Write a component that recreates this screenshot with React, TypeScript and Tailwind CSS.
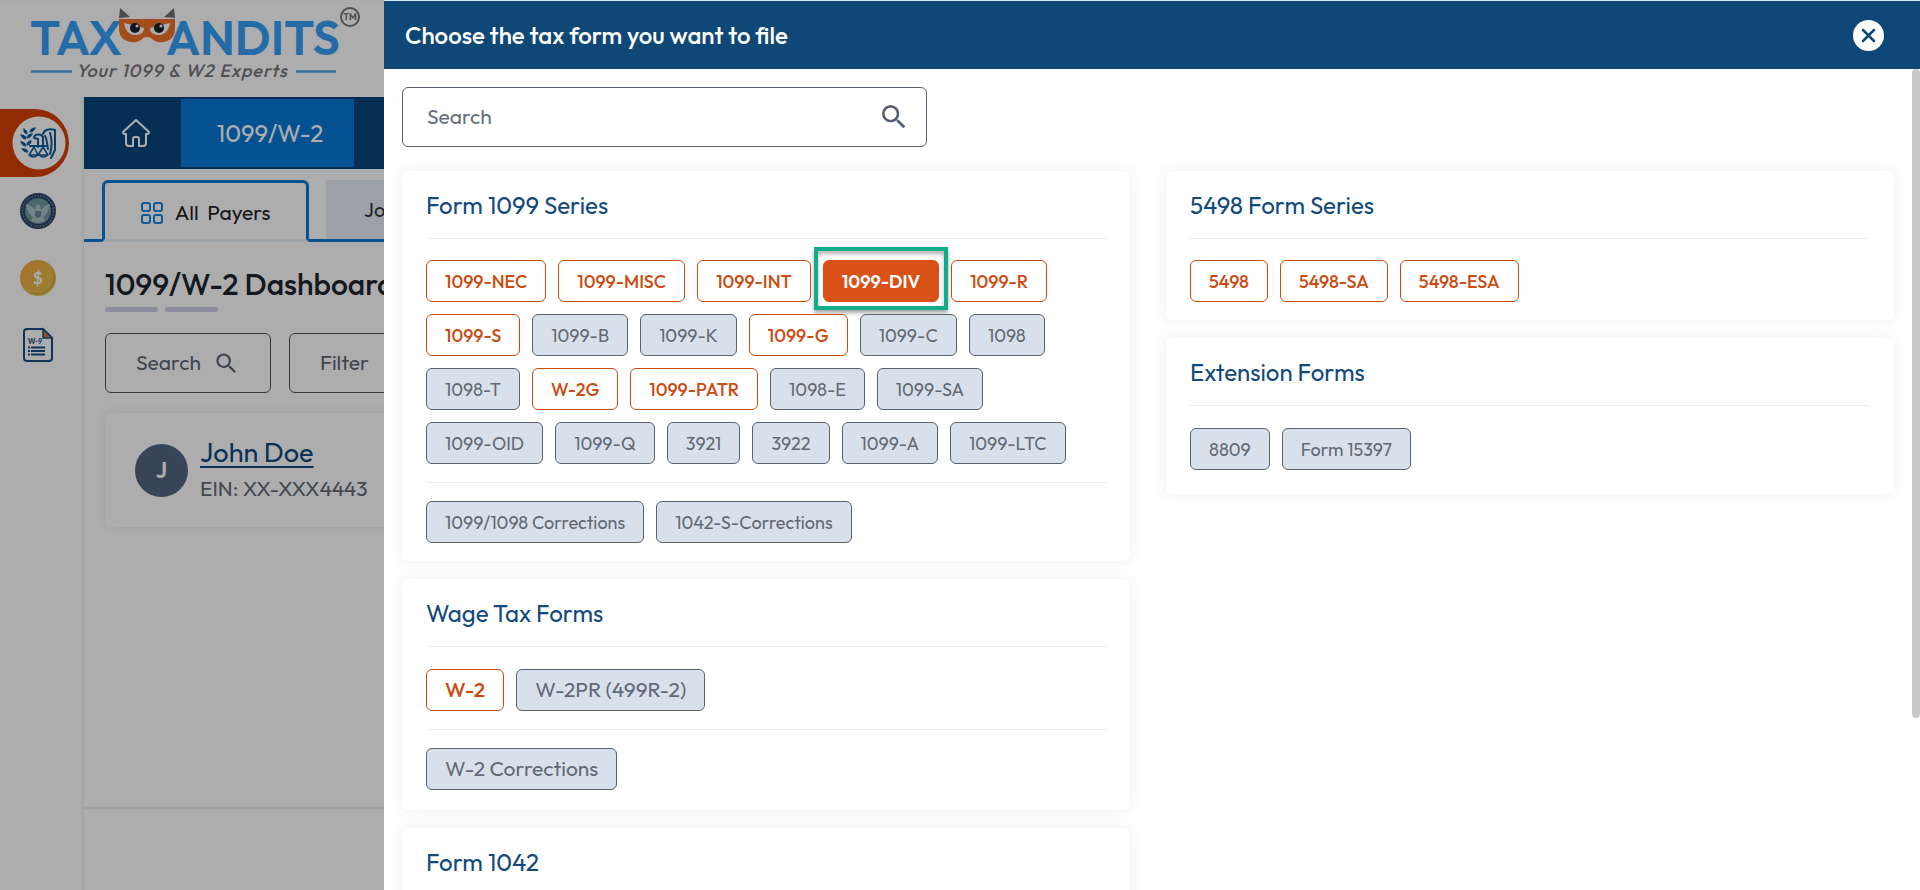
import {type FC, type ReactNode, useState} from "react";
import {MdSearch} from "react-icons/md";

interface IForm {
    name: string,
    enabled?: boolean,
    highlighted?: boolean
}

interface ISeries {
    title: string,
    forms: IForm[],
    corrections?: IForm[],
    large?: boolean,
    roomy?: boolean
}

const leftSeries: ISeries[] = [
    {
        title: "Form 1099 Series",
        forms: [
            {name: "1099-NEC", enabled: true},
            {name: "1099-MISC", enabled: true},
            {name: "1099-INT", enabled: true},
            {name: "1099-DIV", enabled: true, highlighted: true},
            {name: "1099-R", enabled: true},
            {name: "1099-S", enabled: true},
            {name: "1099-B"},
            {name: "1099-K"},
            {name: "1099-G", enabled: true},
            {name: "1099-C"},
            {name: "1098"},
            {name: "1098-T"},
            {name: "W-2G", enabled: true},
            {name: "1099-PATR", enabled: true},
            {name: "1098-E"},
            {name: "1099-SA"},
            {name: "1099-OID"},
            {name: "1099-Q"},
            {name: "3921"},
            {name: "3922"},
            {name: "1099-A"},
            {name: "1099-LTC"}
        ],
        corrections: [{name: "1099/1098 Corrections"}, {name: "1042-S-Corrections"}]
    },
    {
        title: "Wage Tax Forms",
        forms: [{name: "W-2", enabled: true}, {name: "W-2PR (499R-2)"}],
        corrections: [{name: "W-2 Corrections"}],
        large: true
    },
    {
        title: "Form 1042",
        forms: []
    }
];

const rightSeries: ISeries[] = [
    {
        title: "5498 Form Series",
        forms: [
            {name: "5498", enabled: true},
            {name: "5498-SA", enabled: true},
            {name: "5498-ESA", enabled: true}
        ]
    },
    {
        title: "Extension Forms",
        forms: [{name: "8809"}, {name: "Form 15397"}],
        roomy: true
    }
];

const enabledClasses = "border-[#cb4b10] bg-white text-[#cb4b10] font-medium cursor-pointer";
const selectedClasses = "border-[#d95117] bg-[#d95117] text-white font-semibold cursor-pointer";
const disabledClasses = "border-[#5b626c] bg-[#d8e0ec] text-[#626a74]";

const FormChip: FC<{ form: IForm, large?: boolean }> = ({form, large}) => {
    const colors = form.highlighted ? selectedClasses : form.enabled ? enabledClasses : disabledClasses;
    return (
        <div className="relative">
            <button
                type="button"
                disabled={!form.enabled}
                className={`h-[42px] px-[18px] rounded-md border whitespace-nowrap ${large ? "text-[21px]" : "text-[18px]"} ${colors}`}
            >
                {form.name}
            </button>
            {form.highlighted && (
                <span
                    className="absolute -inset-x-[9px] -top-[13px] -bottom-2 border-4 border-[#12ab8b] shadow-[0_3px_4px_rgba(0,0,0,0.35),inset_0_3px_4px_rgba(0,0,0,0.3)] pointer-events-none"/>
            )}
        </div>
    );
}

const SeriesCard: FC<{ series: ISeries }> = ({series}) => (
    <section
        className={`bg-white rounded-md px-6 shadow-[0_0_14px_rgba(60,90,120,0.10)] ${series.roomy ? "pb-6" : series.large ? "pb-5" : "pb-[18px]"}`}
    >
        <h2 className="h-[68px] flex items-center border-b border-[#e9eef3] text-[24px] text-[#134a7c]">
            {series.title}
        </h2>
        <div className={`flex flex-wrap gap-3 ${series.roomy || series.large ? "pt-[22px]" : "pt-[21px]"}`}>
            {series.forms.map(form => <FormChip key={form.name} form={form} large={series.large}/>)}
        </div>
        {series.corrections && (
            <div className="flex flex-wrap gap-3 mt-[18px] pt-[18px] border-t border-[#e9eef3]">
                {series.corrections.map(form => <FormChip key={form.name} form={form} large={series.large}/>)}
            </div>
        )}
    </section>
);

const Logo: FC = () => (
    <svg width="344" height="96" viewBox="0 0 344 96" fontFamily="Outfit, Lato, sans-serif" role="img"
         aria-label="TaxBandits">
        <g fill="#349ff6" fontWeight="600" fontSize="48">
            <text x="30" y="54">TAX</text>
            <text x="166" y="54">ANDITS</text>
        </g>
        <path d="M120 7l10 9-11 1zM174 7l-10 9 11 1z" fill="#6f6f75"/>
        <path
            d="M119 18h56v10c0 7-4 12-12 13-6 1-9-1-12-4q-4-2-8 0c-3 3-6 5-12 4-8-1-12-6-12-13z"
            fill="#f0702a"/>
        <path d="M124 22l20 5c0 5-4 7-9 7-6 0-10-5-11-12zM170 22l-20 5c0 5 4 7 9 7 6 0 10-5 11-12z" fill="#fff"/>
        <circle cx="135" cy="27" r="5" fill="#16202c"/>
        <circle cx="159" cy="27" r="5" fill="#16202c"/>
        <circle cx="137" cy="25" r="1.500" fill="#fff"/>
        <circle cx="161" cy="25" r="1.500" fill="#fff"/>
        <path d="M31 70.500h41M296 70.500h40" stroke="#4fa5e6" strokeWidth="2.500"/>
        <text x="76" y="76" fontSize="18" fontWeight="500" fontStyle="italic" fill="#77777c" letterSpacing="1">
            Your 1099 &amp; W2 Experts
        </text>
    </svg>
);

const HomeIcon: FC = () => (
    <svg width="30" height="30" viewBox="0 0 30 30" fill="none" stroke="#fff" strokeWidth="2" strokeLinejoin="round">
        <path
            d="M15 2L2 14q0 2 2 2h1v9q0 3 3 3h4v-7q0-2 2-2h2q2 0 2 2v7h4q3 0 3-3v-9h1q2 0 2-2L15 2z"/>
    </svg>
);

const EagleIcon: FC = () => (
    <svg width="54" height="54" viewBox="0 0 54 54" fill="none" stroke="#0f5c9c" strokeWidth="1.500"
         strokeLinecap="round" strokeLinejoin="round">
        <circle cx="27" cy="27" r="26.500" fill="#fff" stroke="none"/>
        <path
            d="M9 19q1 4 5 4 0-4-5-4zM9 26q1 4 5 4 0-4-5-4zM10 33q2 4 6 3-1-4-6-3zM12 13q-1 4 3 5 1-3-3-5zM23 12q-5 0-5 4 4 0 5-4zM20 18q-5 0-5 4 4 0 5-4zM19 25q-4 0-4 4 4 0 4-4z"
            fill="#0f5c9c" strokeWidth="1"/>
        <path d="M22 22c0-4 7-5 9-1v9M22 22l4 1v8M18 30h16" strokeWidth="2"/>
        <path d="M22 31l-5 8h9zM31 31l-5 8h10zM17 39q4 4 9 0M27 39q4 4 9 0"/>
        <path d="M31 18c1-4 6-6 12-4v20l-4 8" strokeWidth="2"/>
        <path d="M33 20c2 3 2 8 3 13M38 17c2 6 2 14 0 21" strokeWidth="2"/>
    </svg>
);

const SealIcon: FC = () => (
    <svg width="36" height="36" viewBox="0 0 36 36">
        <circle cx="18" cy="18" r="18" fill="#2b4468"/>
        <circle cx="18" cy="18" r="15.500" fill="none" stroke="#5d7890" strokeWidth="2" strokeDasharray="1.500 1.500"/>
        <circle cx="18" cy="18" r="13" fill="#6d98a0"/>
        <path d="M6 11c4 1 7 3 9 6l1-4q2-3 4 0l1 4c2-3 5-5 9-6-1 7-4 11-7 13l2 4-7 2-7-2 2-4c-3-2-6-6-7-13z"
              fill="#a9c3c9"/>
        <path d="M15 18h6v5q-3 4-6 0z" fill="#6888a0"/>
    </svg>
);

const CoinIcon: FC = () => (
    <svg width="36" height="36" viewBox="0 0 36 36">
        <defs>
            <linearGradient id="coin" x1="0" y1="0" x2="1" y2="1">
                <stop offset="0" stopColor="#f6a33c"/>
                <stop offset="1" stopColor="#dcc653"/>
            </linearGradient>
        </defs>
        <circle cx="18" cy="18" r="18" fill="url(#coin)"/>
        <path d="M31 8a16 16 0 0 1-20 24" fill="none" stroke="#c79a35" strokeWidth="1"/>
        <text x="18" y="24" textAnchor="middle" fontSize="17" fontWeight="700" fill="#fff"
              fontFamily="Lato, sans-serif">$
        </text>
    </svg>
);

const W9Icon: FC = () => (
    <svg width="30" height="36" viewBox="0 0 30 36">
        <path d="M4 2h16l9 9v20q0 3-3 3H4q-3 0-3-3V5q0-3 3-3z" fill="none" stroke="#174d80" strokeWidth="2"/>
        <path d="M20 2v9h9z" fill="#e8713c" stroke="#174d80" strokeWidth="1.500"/>
        <text x="5" y="17" fontSize="7" fontWeight="900" fill="#174d80" fontFamily="Lato, sans-serif">W-9</text>
        <path d="M5 20.500h2M8 20.500h14M5 24h2M8 24h14M5 27.500h2M8 27.500h14" stroke="#174d80" strokeWidth="2"/>
    </svg>
);

const GridIcon: FC = () => (
    <svg width="22" height="22" viewBox="0 0 22 22" fill="none" stroke="#1688e0" strokeWidth="2">
        <rect x="1" y="1" width="8" height="8" rx="2"/>
        <rect x="13" y="1" width="8" height="8" rx="2"/>
        <rect x="1" y="13" width="8" height="8" rx="2"/>
        <rect x="13" y="13" width="8" height="8" rx="2"/>
    </svg>
);

const SideItem: FC<{ label: string, children: ReactNode }> = ({label, children}) => (
    <a href="#" aria-label={label} className="h-[67px] w-[76px] flex items-center justify-center">{children}</a>
);

const Dashboard: FC = () => (
    <div className="h-full flex flex-col bg-white">
        <header className="h-[97px] shrink-0 flex border-t border-[#f4fbfd]">
            <Logo/>
            <span
                className="mt-[6px] -ml-1 size-5 rounded-full border-2 border-[#77777c] text-[#77777c] text-[9px] leading-4 font-bold text-center">
                TM
            </span>
        </header>
        <div className="flex-1 flex min-h-0">
            <aside className="w-[84px] shrink-0 border-r-2 border-[#eef4f4] pt-3">
                <a href="#" aria-label="IRS forms"
                   className="h-[68px] w-[69px] flex items-center pl-3 rounded-r-full bg-[#d94003]">
                    <EagleIcon/>
                </a>
                <SideItem label="State forms"><SealIcon/></SideItem>
                <SideItem label="Payments"><CoinIcon/></SideItem>
                <SideItem label="W-9"><W9Icon/></SideItem>
            </aside>
            <main className="flex-1 flex flex-col min-w-0">
                <nav className="h-[72px] shrink-0 flex bg-[#0b467f] py-0.5 text-white">
                    <a href="#" aria-label="Home" className="w-[97px] flex items-center pl-[37px]"><HomeIcon/></a>
                    <a href="#" className="w-[173px] pl-[5px] flex items-center justify-center bg-[#0879d8] text-[24px]">
                        1099/W-2
                    </a>
                </nav>
                <div className="flex mt-[11px] h-[62px] shrink-0 border-b-3 border-[#0c7ad4] pl-[18px]">
                    <button type="button"
                            className="w-[207px] h-[62px] pt-1 flex items-center justify-center gap-3 border-3 border-[#0c7ad4] border-b-[#e9f2f8] bg-white rounded-t-md text-[21px] text-[#1f242b]">
                        <GridIcon/> All&nbsp; Payers
                    </button>
                    <button type="button"
                            className="ml-[17px] w-[200px] pl-[38px] bg-[#e8ecf2] text-left text-[20px] text-[#2f363f]">
                        Jobs
                    </button>
                </div>
                <div className="pl-[21px] pt-[22px] flex-1">
                    <h1 className="text-[30px] leading-10 font-medium text-[#1c252e] whitespace-nowrap">
                        1099/W-2 Dashboard
                    </h1>
                    <div className="flex gap-[7px] mt-[3px]">
                        <span className="w-[53px] h-[5px] rounded-full bg-[#ced0e8]"/>
                        <span className="w-[53px] h-[5px] rounded-full bg-[#ced0e8]"/>
                    </div>
                    <div className="flex gap-[18px] mt-[21px] text-[21px] text-[#5f6977]">
                        <button type="button"
                                className="w-[166px] h-[60px] flex items-center justify-center gap-3 border border-[#4d535b] rounded-md">
                            Search <MdSearch size={27}/>
                        </button>
                        <button type="button"
                                className="w-[166px] h-[60px] pl-[30px] text-left border border-[#4d535b] rounded-md">
                            Filter
                        </button>
                    </div>
                    <div
                        className="mt-5 h-[114px] flex items-center gap-3 pl-[30px] rounded-md shadow-[0_0_10px_rgba(60,90,120,0.12)]">
                        <span
                            className="size-[53px] rounded-full bg-[#53667f] text-white text-[22px] font-semibold flex items-center justify-center">
                            J
                        </span>
                        <div className="flex flex-col">
                            <a href="#" className="text-[27px] leading-9 text-[#0f4a7f] underline underline-offset-4 decoration-2">
                                John Doe
                            </a>
                            <span className="text-[21px] leading-9 text-[#656c75]">EIN: XX-XXX4443</span>
                        </div>
                    </div>
                </div>
                <footer className="h-[83px] border-t-2 border-[#edf1f1]"/>
            </main>
        </div>
    </div>
);

const App: FC = () => {
    const [search, setSearch] = useState("");

    const filterSeries = (list: ISeries[]) => list.map(s => ({
        ...s,
        forms: s.forms.filter(f => f.name.toLowerCase().includes(search.toLowerCase()))
    }));

    return (
        <div className="relative h-screen overflow-hidden font-[Outfit,Lato,sans-serif]">
            <Dashboard/>
            <div className="absolute inset-0 bg-black/32"/>
            <div role="dialog" aria-labelledby="form-picker-title"
                 className="absolute inset-y-0 right-0 w-4/5 flex flex-col bg-white border-t border-[#cdeaf7]">
                <header className="h-[68px] shrink-0 flex items-center justify-between pl-[21px] pr-9 bg-[#0f4777]">
                    <h1 id="form-picker-title" className="text-[24px] font-medium text-white">
                        Choose the tax form you want to file
                    </h1>
                    <button type="button" aria-label="Close"
                            className="size-[31px] rounded-full bg-white flex items-center justify-center cursor-pointer">
                        <svg width="15" height="15" viewBox="0 0 15 15" stroke="#0f4777" strokeWidth="2.500"
                             strokeLinecap="round">
                            <path d="M2 2l11 11M13 2L2 13"/>
                        </svg>
                    </button>
                </header>
                <div className="flex-1 min-h-0 flex">
                    <div className="flex-1 overflow-hidden p-[18px]">
                        <label
                            className="max-w-[525px] h-[60px] flex items-center pl-6 pr-4 border border-[#566070] rounded-md text-[#566070]">
                            <input
                                type="text"
                                name="search"
                                aria-label="Search"
                                placeholder="Search"
                                value={search}
                                onChange={e => setSearch(e.target.value)}
                                className="flex-1 text-[21px] outline-none placeholder:text-[#66707d]"
                            />
                            <MdSearch size={32}/>
                        </label>
                        <div className="grid grid-cols-2 items-start gap-9 mt-6">
                            <div className="flex flex-col gap-[18px]">
                                {filterSeries(leftSeries).map(s => <SeriesCard key={s.title} series={s}/>)}
                            </div>
                            <div className="flex flex-col gap-[18px]">
                                {filterSeries(rightSeries).map(s => <SeriesCard key={s.title} series={s}/>)}
                            </div>
                        </div>
                    </div>
                    <div className="w-2 shrink-0">
                        <div className="h-[79%] rounded-full bg-[#c8c8c8]"/>
                    </div>
                </div>
            </div>
        </div>
    )
}

export default App;
